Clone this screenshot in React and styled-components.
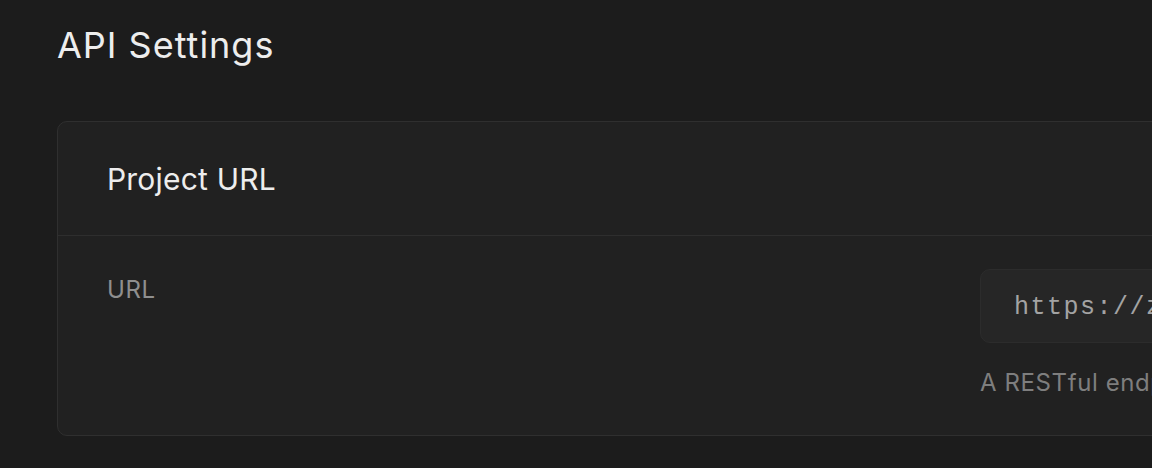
import React from 'react';
import styled, { createGlobalStyle } from 'styled-components';

const GlobalStyle = createGlobalStyle`
  html, body {
    margin: 0;
    padding: 0;
    background: #1c1c1c;
    overflow: hidden;
  }
  body {
    font-family: "Inter", "Noto Sans", sans-serif;
    -webkit-font-smoothing: antialiased;
  }
`;

const Page = styled.div`
  width: 1152px;
  height: 468px;
  padding: 18px 0 0 57px;
  box-sizing: border-box;
  overflow: hidden;
`;

const Heading = styled.h1`
  margin: 0;
  font-size: 36px;
  font-weight: 400;
  line-height: 54px;
  color: #ededed;
  letter-spacing: 1px;
`;

const Card = styled.section`
  margin-top: 49px;
  width: 1400px;
  background: #212121;
  border: 1px solid #2f2f2f;
  border-radius: 10px;
`;

const CardHeader = styled.header`
  height: 113px;
  display: flex;
  align-items: center;
  padding: 0 49px;
  border-bottom: 1px solid #2e2e2e;
`;

const CardTitle = styled.h2`
  margin: 0;
  font-size: 30px;
  font-weight: 400;
  color: #ededed;
  letter-spacing: 0.2px;
`;

const Row = styled.div`
  display: grid;
  grid-template-columns: 873px 1fr;
  padding: 33px 49px 38px;
`;

const Label = styled.label`
  font-size: 24px;
  color: #8f8f8f;
  padding-top: 6px;
  letter-spacing: 0.6px;
`;

const Field = styled.div`
  display: flex;
  flex-direction: column;
  gap: 25px;
`;

const Input = styled.div`
  box-sizing: border-box;
  height: 74px;
  display: flex;
  align-items: center;
  padding: 3px 33px 0;
  background: #262626;
  border: 1px solid #2c2c2c;
  border-radius: 10px;
  font-family: "Liberation Mono", "DejaVu Sans Mono", monospace;
  font-size: 25px;
  letter-spacing: 1.5px;
  color: #a3a3a3;
  white-space: nowrap;
`;

const Help = styled.p`
  margin: 0;
  font-size: 24px;
  color: #7e7e7e;
  letter-spacing: 0.6px;
  white-space: nowrap;
`;

export default function App() {
  return (
    <Page>
      <GlobalStyle />
      <Heading>API Settings</Heading>
      <Card>
        <CardHeader>
          <CardTitle>Project URL</CardTitle>
        </CardHeader>
        <Row>
          <Label>URL</Label>
          <Field>
            <Input>https://zyxwvutsrqponmlk.supabase.co</Input>
            <Help>A RESTful endpoint for querying and managing your database.</Help>
          </Field>
        </Row>
      </Card>
    </Page>
  );
}
